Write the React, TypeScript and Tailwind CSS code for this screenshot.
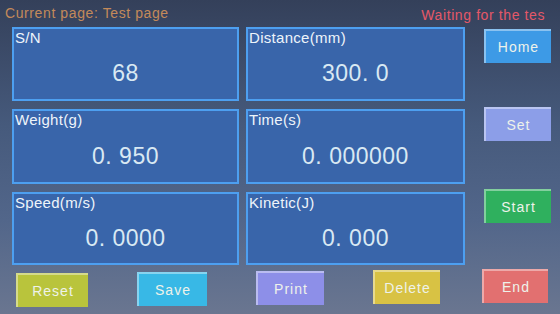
import React from "react";

const font = { fontFamily: '"Liberation Sans", Arial, sans-serif' };

function Panel({ label, value, h }: { label: string; value: string; h: string }) {
  return (
    <div className={`flex flex-col border-2 border-[#4d9ff0] bg-[#3965aa] ${h}`}>
      <div className="pl-[1px] text-[15px] leading-[17px] tracking-[0.3px] text-[#eef4fa]">{label}</div>
      <div className="flex flex-1 items-center justify-center pt-[2px] text-[23px] tracking-[0.5px] text-[#d9e9f3]">
        {value}
      </div>
    </div>
  );
}

function Btn({ label, cls, w }: { label: string; cls: string; w: string }) {
  return (
    <div
      className={`flex h-[34px] ${w} items-center justify-center border-l-2 border-t-2 border-white/40 text-[14px] tracking-[1px] text-[#eef2ea] ${cls}`}
    >
      {label}
    </div>
  );
}

export default function App() {
  return (
    <div
      style={font}
      className="relative h-[314px] w-[560px] overflow-hidden bg-[linear-gradient(180deg,#34405a_0%,#465a7c_40%,#52668a_70%,#6a7690_100%)]"
    >
      <div className="flex h-[27px] items-start justify-between pl-[5px] pr-[15px] pt-[3px] text-[14px] tracking-[0.6px]">
        <span className="text-[#c48a5a]">Current page: Test page</span>
        <span className="pt-[2px] text-[#e45868]">Waiting for the tes</span>
      </div>
      <div className="flex">
        <div className="ml-[12px] grid grid-cols-[227px_219px] gap-x-[7px] gap-y-[8px]">
          <Panel label="S/N" value="68" h="h-[74px]" />
          <Panel label="Distance(mm)" value="300. 0" h="h-[74px]" />
          <Panel label="Weight(g)" value="0. 950" h="h-[75px]" />
          <Panel label="Time(s)" value="0. 000000" h="h-[75px]" />
          <Panel label="Speed(m/s)" value="0. 0000" h="h-[73px]" />
          <Panel label="Kinetic(J)" value="0. 000" h="h-[73px]" />
        </div>
        <div className="ml-[19px] flex flex-col pt-[2px]">
          <Btn label="Home" cls="bg-[#3d9ae6]" w="w-[67px]" />
          <div className="h-[44px]" />
          <Btn label="Set" cls="bg-[#8c9ee8]" w="w-[67px]" />
          <div className="h-[48px]" />
          <Btn label="Start" cls="bg-[#2fb05e]" w="w-[67px]" />
        </div>
      </div>
      <div className="mt-[6px] flex items-start pl-[16px]">
        <Btn label="Reset" cls="bg-[#b9c43c] mt-[2px]" w="w-[72px]" />
        <div className="w-[49px]" />
        <Btn label="Save" cls="bg-[#38b8e6] mt-[1px]" w="w-[70px]" />
        <div className="w-[49px]" />
        <Btn label="Print" cls="bg-[#8d8fe8]" w="w-[68px]" />
        <div className="w-[49px]" />
        <Btn label="Delete" cls="bg-[#d8c244] -mt-[1px]" w="w-[67px]" />
        <div className="w-[42px]" />
        <Btn label="End" cls="bg-[#e27070] -mt-[2px]" w="w-[66px]" />
      </div>
    </div>
  );
}
